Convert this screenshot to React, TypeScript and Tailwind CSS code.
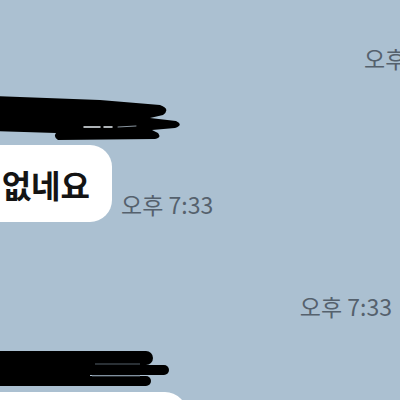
const FONT = "font-['Noto_Sans_CJK_KR','Noto_Sans',sans-serif]";

// 검게 칠한 이름 부분 (스크린샷의 낙서)
function Scribble({ variant }: { variant: 1 | 2 }) {
  if (variant === 1) {
    return (
      <svg width="190" height="52" viewBox="0 0 190 52" className="block">
        <path
          d="M-10 3 L100 7 L160 12 Q171 16 163 22 L150 25 L176 28 Q184 32 175 35 L152 37 L158 40 Q162 45 155 46 L58 47 Q53 44 56 40 L-10 38 Z"
          fill="#000"
        />
        <line x1="84" y1="34" x2="100" y2="34" stroke="#e8eef3" strokeWidth="1.5" strokeLinecap="round" />
        <line x1="104" y1="34" x2="112" y2="34" stroke="#e8eef3" strokeWidth="1.5" strokeLinecap="round" />
        <line x1="118" y1="34" x2="136" y2="33" stroke="#8a96a0" strokeWidth="1" strokeLinecap="round" />
      </svg>
    );
  }
  return (
    <svg width="190" height="44" viewBox="0 0 190 44" className="block">
      <line x1="-10" y1="10" x2="146" y2="10" stroke="#000" strokeWidth="14" strokeLinecap="round" />
      <line x1="-10" y1="22" x2="164" y2="22" stroke="#000" strokeWidth="10" strokeLinecap="round" />
      <line x1="-10" y1="33" x2="146" y2="33" stroke="#000" strokeWidth="10" strokeLinecap="round" />
      <line x1="-10" y1="17" x2="90" y2="17" stroke="#000" strokeWidth="6" />
      <line x1="-10" y1="28" x2="90" y2="28" stroke="#000" strokeWidth="6" />
      <line x1="95" y1="16" x2="140" y2="16" stroke="#55606a" strokeWidth="1" />
      <line x1="92" y1="28" x2="140" y2="28" stroke="#55606a" strokeWidth="1" />
    </svg>
  );
}

function Time({ className = "" }: { className?: string }) {
  return (
    <span className={`whitespace-nowrap text-[23px] leading-none text-[#55616d] ${className}`}>
      오후 7:33
    </span>
  );
}

export default function App() {
  return (
    <div className={`relative flex h-[400px] w-[400px] flex-col overflow-hidden bg-[#abc0d1] ${FONT}`}>
      <div className="pl-[364px] pt-[47px]">
        <Time />
      </div>

      <div className="mt-[20px]">
        <Scribble variant={1} />
      </div>

      <div className="flex items-end gap-[9px]">
        <div className="-ml-[30px] flex h-[77px] w-[142px] items-center justify-end rounded-[22px] bg-white pr-[22px]">
          <span className="whitespace-nowrap text-[32px] font-bold leading-none text-[#141414]">없네요</span>
        </div>
        <Time className="mb-[6px]" />
      </div>

      <div className="mt-[73px] flex justify-end pr-[8px]">
        <Time />
      </div>

      <div className="mt-[30px]">
        <Scribble variant={2} />
      </div>

      <div className="-ml-[30px] mt-[0px] h-[40px] w-[217px] shrink-0 rounded-tr-[22px] bg-white" />
    </div>
  );
}
